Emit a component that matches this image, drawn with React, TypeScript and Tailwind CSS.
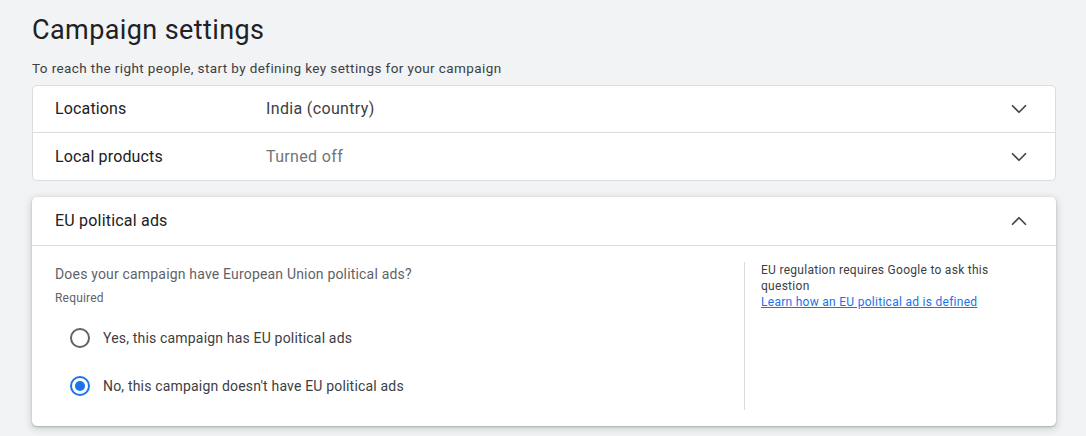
import { ChevronDown, ChevronUp } from 'lucide-react'

const rows = [
  { label: 'Locations', value: 'India (country)', tone: 'text-[#3c4043]' },
  { label: 'Local products', value: 'Turned off', tone: 'text-[#70757a]' },
]

function Radio({ checked }: { checked?: boolean }) {
  if (checked) {
    return (
      <span className="flex h-5 w-5 shrink-0 items-center justify-center rounded-full border-2 border-[#1a73e8]">
        <span className="h-[10px] w-[10px] rounded-full bg-[#1a73e8]" />
      </span>
    )
  }
  return <span className="h-5 w-5 shrink-0 rounded-full border-2 border-[#5f6368]" />
}

export default function App() {
  return (
    <div className="min-h-[436px] w-[1086px] bg-[#f1f3f4] pl-8 pr-[30px] pt-[14px] font-[Roboto,Arial,sans-serif]">
      <h1 className="text-[27px] leading-[32px] tracking-[0.4px] text-[#202124]">Campaign settings</h1>
      <p className="mt-3 text-[13.5px] leading-[20px] tracking-[0.4px] text-[#3c4043]">
        To reach the right people, start by defining key settings for your campaign
      </p>

      <div className="mt-[7px]">
        {rows.map((r, i) => (
          <div
            key={r.label}
            className={`flex h-[48px] items-center border border-[#dadce0] bg-white pl-[22px] pr-[23px] ${
              i === 0 ? 'rounded-t-[5px]' : 'rounded-b-[5px] border-t-0'
            }`}
          >
            <span className="w-[211px] text-[16px] tracking-[0.15px] text-[#202124]">{r.label}</span>
            <span className={`flex-1 text-[16px] tracking-[0.35px] ${r.tone}`}>{r.value}</span>
            <ChevronDown size={26} strokeWidth={1.6} className="text-[#444746]" />
          </div>
        ))}
      </div>

      <div className="mt-4 rounded-[5px] bg-white shadow-[0_1px_2px_rgba(60,64,67,0.3),0_2px_6px_2px_rgba(60,64,67,0.15)]">
        <div className="flex h-[49px] items-center border-b border-[#dadce0] pl-[23px] pr-[24px]">
          <span className="flex-1 text-[16px] tracking-[0.2px] text-[#202124]">EU political ads</span>
          <ChevronUp size={26} strokeWidth={1.6} className="text-[#444746]" />
        </div>
        <div className="flex py-4">
          <div className="w-[713px] border-r border-[#dadce0] pl-[23px] pt-[2px]">
            <p className="text-[14px] leading-[20px] tracking-[0.18px] text-[#5f6368]">
              Does your campaign have European Union political ads?
            </p>
            <p className="mt-[6px] text-[12px] leading-[16px] tracking-[0.2px] text-[#5f6368]">Required</p>
            <div className="mt-2 flex flex-col">
              <label className="flex h-[48px] items-center gap-[13px] pl-[15px]">
                <Radio />
                <span className="text-[14px] tracking-[0.18px] text-[#3c4043]">Yes, this campaign has EU political ads</span>
              </label>
              <label className="flex h-[48px] items-center gap-[13px] pl-[15px]">
                <Radio checked />
                <span className="text-[14px] tracking-[0.18px] text-[#3c4043]">No, this campaign doesn't have EU political ads</span>
              </label>
            </div>
          </div>
          <div className="flex-1 pl-4 pr-6 text-[12px] leading-[16px] tracking-[0.28px] text-[#3c4043]">
            <p>EU regulation requires Google to ask this question</p>
            <a href="#" className="text-[#1a73e8] underline">
              Learn how an EU political ad is defined
            </a>
          </div>
        </div>
      </div>
    </div>
  )
}
